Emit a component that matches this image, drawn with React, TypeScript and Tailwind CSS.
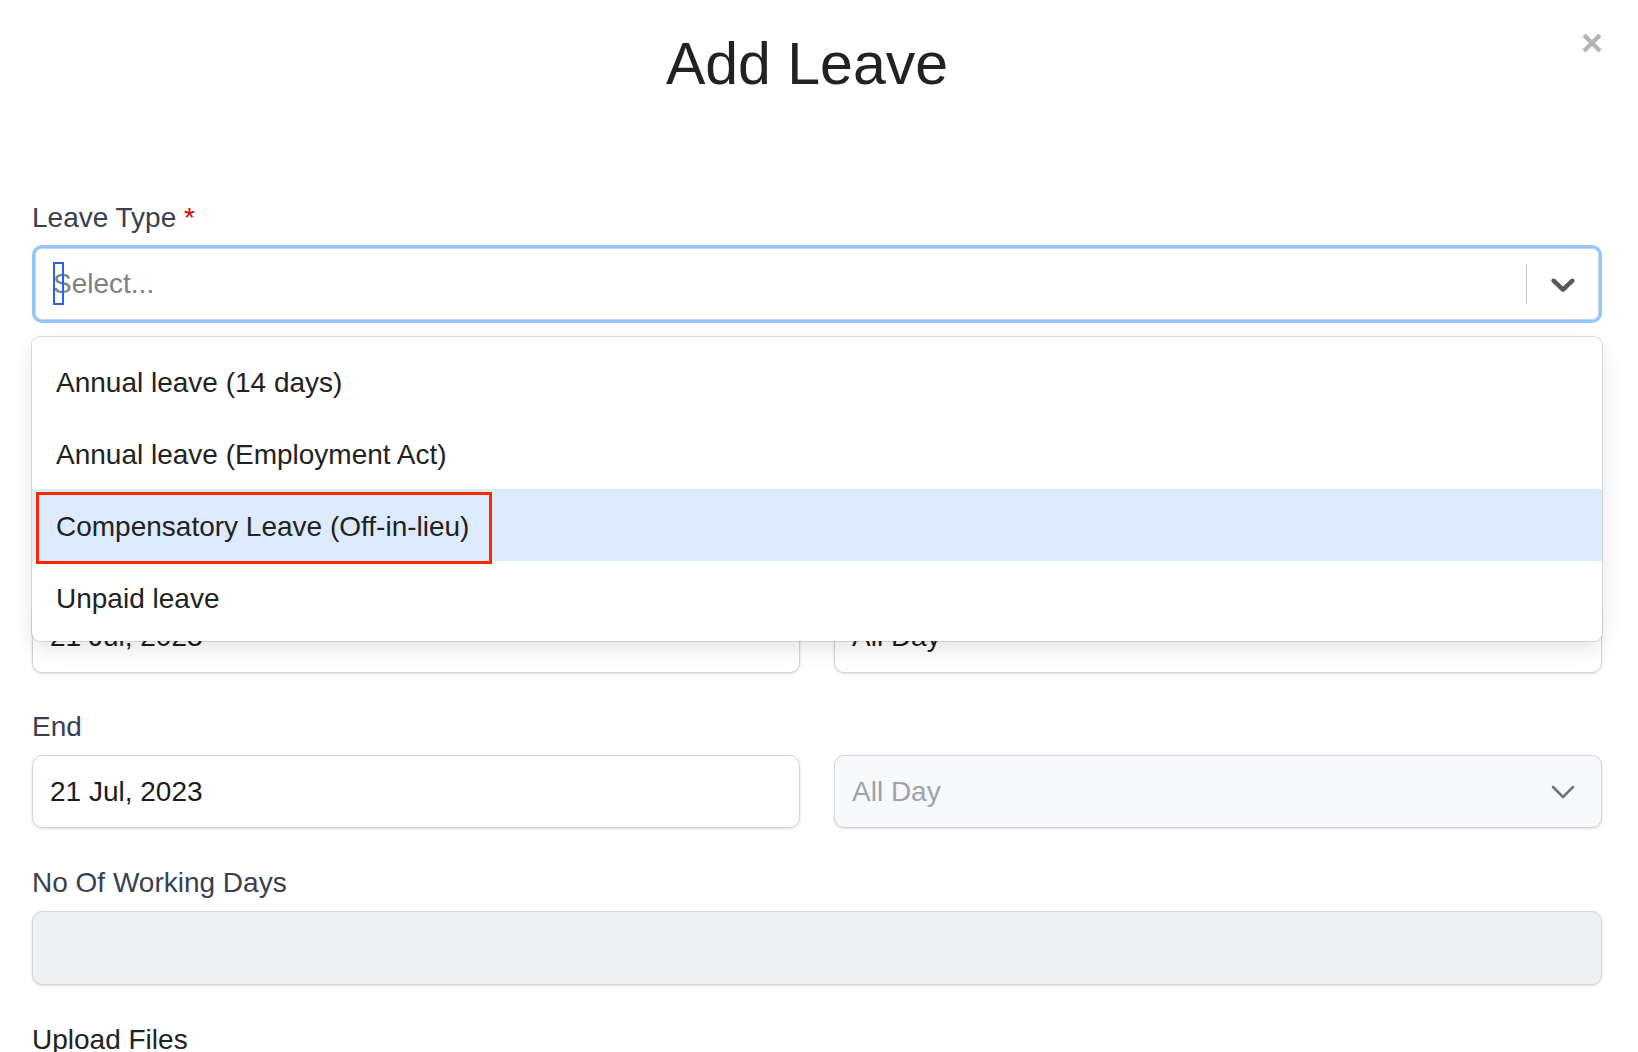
import React from "react";

const leaveTypes = [
  "Annual leave (14 days)",
  "Annual leave (Employment Act)",
  "Compensatory Leave (Off-in-lieu)",
  "Unpaid leave",
];

const font = { fontFamily: '"Liberation Sans", Arial, Helvetica, sans-serif' };

const SelectChevron = () => (
  <svg width="40" height="40" viewBox="0 0 20 20" fill="#5b5b5b" aria-hidden="true">
    <path d="M4.516 7.548c0.436-0.446 1.043-0.481 1.576 0l3.908 3.747 3.908-3.747c0.533-0.481 1.141-0.446 1.574 0 0.436 0.445 0.408 1.197 0 1.615-0.406 0.418-4.695 4.502-4.695 4.502-0.217 0.223-0.502 0.335-0.787 0.335s-0.57-0.112-0.789-0.335c0 0-4.287-4.084-4.695-4.502s-0.436-1.17 0-1.615z" />
  </svg>
);

const FieldChevron = () => (
  <svg width="40" height="40" viewBox="0 0 24 24" fill="none" stroke="#6b7280" strokeWidth="1.5" strokeLinecap="round" strokeLinejoin="round" aria-hidden="true">
    <path d="M6 9l6 6 6-6" />
  </svg>
);

const Label: React.FC<{ children: React.ReactNode; className?: string }> = ({ children, className }) => (
  <div className={`text-[28px] leading-[28px] text-[#374151] ${className ?? ""}`}>{children}</div>
);

// date + day-part row, used for Start and End
const DateRow: React.FC<{ date: string; dayPart: string; disabled?: boolean }> = ({ date, dayPart, disabled }) => (
  <div className="mt-[14px] grid grid-cols-2 gap-[34px]">
    <div className="flex h-[73px] items-center rounded-[10px] border border-[#d1d5db] bg-white pl-[17px] text-[28px] text-[#1c1c1c] shadow-sm">
      {date}
    </div>
    <div
      className={`flex h-[73px] items-center justify-between rounded-[10px] border border-[#d1d5db] pl-[17px] pr-[18px] text-[28px] shadow-sm ${
        disabled ? "bg-[#f8f9fb] text-[#9ca3af]" : "bg-white text-[#1c1c1c]"
      }`}
    >
      <span>{dayPart}</span>
      {disabled && <FieldChevron />}
    </div>
  </div>
);

export default function App() {
  return (
    <div className="min-h-screen bg-white pl-[32px] pr-[36px] pt-[33px]" style={font}>
      {/* header */}
      <div className="flex items-start">
        <h1 className="mt-[2px] flex-1 text-center text-[59px] font-normal leading-none text-[#222222]">Add Leave</h1>
        <button className="h-[20px] w-[20px]" aria-label="Close">
          <svg width="20" height="20" viewBox="0 0 20 20" stroke="#b5b5b5" strokeWidth="4.5">
            <path d="M2 2l16 16M18 2L2 18" />
          </svg>
        </button>
      </div>

      {/* leave type */}
      <Label className="mt-[110px]">
        Leave Type <span className="text-[#e00000]">*</span>
      </Label>
      <div className="relative mt-[13px]">
        <div className="relative flex h-[78px] items-center rounded-[10px] border-[3px] border-[#93c5fd] bg-white shadow-[inset_0_0_0_1px_#c7d2fe]">
          <span className="flex-1 pl-[18px] text-[28px] text-[#808080]">Select...</span>
          <span className="absolute left-[18px] top-[14px] h-[43px] w-[11px] border-2 border-[#2563eb]" />
          <span className="h-[40px] w-px bg-[#cccccc]" />
          <span className="flex w-[72px] items-center justify-center">
            <SelectChevron />
          </span>
        </div>

        {/* open menu */}
        <div className="absolute left-0 right-0 top-[92px] z-10 rounded-[8px] bg-white py-[8px] shadow-[0_0_0_1px_rgba(0,0,0,0.12),0_8px_22px_rgba(0,0,0,0.1)]">
          {leaveTypes.map((t, i) => (
            <div
              key={t}
              className={`relative px-[24px] pb-[14px] pt-[18px] text-[28px] leading-[40px] text-[#222222] ${
                i === 2 ? "bg-[#deebff]" : ""
              }`}
            >
              {t}
              {i === 2 && (
                <span className="absolute left-[4px] top-[3px] h-[72px] w-[456px] border-[3px] border-[#ff2600]" />
              )}
            </div>
          ))}
        </div>
      </div>

      {/* start */}
      <Label className="mt-[235px]">Start</Label>
      <DateRow date="21 Jul, 2023" dayPart="All Day" />

      {/* end */}
      <Label className="mt-[40px]">End</Label>
      <DateRow date="21 Jul, 2023" dayPart="All Day" disabled />

      {/* working days */}
      <Label className="mt-[41px]">No Of Working Days</Label>
      <div className="mt-[14px] h-[74px] rounded-[10px] border border-[#d1d5db] bg-[#eff0f3] shadow-sm" />

      <div className="mt-[41px] text-[28px] leading-[28px] text-[#222222]">Upload Files</div>
      <div className="mt-[14px] h-[120px]" />
    </div>
  );
}
